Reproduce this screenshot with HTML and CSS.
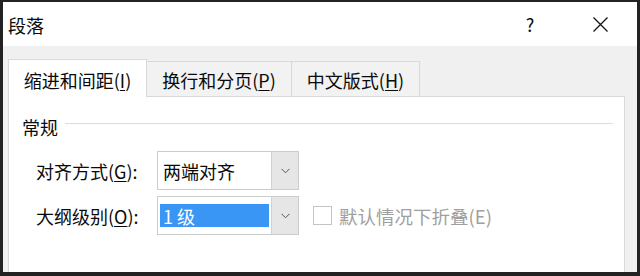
FILE: index.html
```html
<!DOCTYPE html>
<html lang="zh-CN">
<head>
<meta charset="utf-8">
<title>段落</title>
<link rel="stylesheet" href="styles.css">
</head>
<body>
<div class="window">
  <div class="titlebar">
    <div class="title">段落</div>
    <div class="spacer"></div>
    <div class="help">?</div>
    <div class="close">
      <svg width="15" height="15" viewBox="0 0 15 15"><path d="M0.5 0.5 L14.5 14.5 M14.5 0.5 L0.5 14.5" stroke="#111" stroke-width="1.3" fill="none"/></svg>
    </div>
  </div>
  <div class="body">
    <div class="tabs">
      <div class="tab active">缩进和间距(<u>I</u>)</div>
      <div class="tab tab2">换行和分页(<u>P</u>)</div>
      <div class="tab tab3">中文版式(<u>H</u>)</div>
    </div>
    <div class="panel">
      <div class="group-head">
        <span class="group-title">常规</span>
        <span class="group-line"></span>
      </div>
      <div class="row">
        <div class="label">对齐方式(<u>G</u>):</div>
        <div class="combo">
          <div class="combo-value">两端对齐</div>
          <div class="combo-btn"><svg width="9" height="6" viewBox="0 0 9 6"><path d="M0.5 0.8 L4.5 4.8 L8.5 0.8" stroke="#555" stroke-width="1" fill="none"/></svg></div>
        </div>
      </div>
      <div class="row row2">
        <div class="label">大纲级别(<u>O</u>):</div>
        <div class="combo">
          <div class="combo-value"><span class="selected">1 级</span></div>
          <div class="combo-btn"><svg width="9" height="6" viewBox="0 0 9 6"><path d="M0.5 0.8 L4.5 4.8 L8.5 0.8" stroke="#555" stroke-width="1" fill="none"/></svg></div>
        </div>
        <div class="checkbox"></div>
        <div class="check-label">默认情况下折叠(E)</div>
      </div>
    </div>
  </div>
</div>
</body>
</html>
```
FILE: styles.css
```css
html, body {
  margin: 0;
  padding: 0;
  background: #222;
}
body {
  font-family: "Noto Sans CJK SC", "Noto Sans", sans-serif;
  font-size: 18px;
  color: #0a0a0a;
}
u {
  text-decoration: underline;
  text-underline-offset: 2px;
  text-decoration-thickness: 1px;
}
.window {
  width: 640px;
  height: 276px;
  box-sizing: border-box;
  border-style: solid;
  border-color: #222;
  border-width: 2px 3px 4px 3px;
  display: flex;
  flex-direction: column;
  overflow: hidden;
}
.titlebar {
  height: 44px;
  flex: none;
  background: #fff;
  display: flex;
  align-items: center;
  padding: 0 29px 0 5px;
}
.title {
  line-height: 20px;
  padding-top: 2px;
}
.spacer {
  flex: 1;
}
.help {
  width: 20px;
  text-align: center;
  font-size: 18px;
  line-height: 20px;
  margin-right: 53px;
}
.close {
  width: 15px;
  height: 15px;
  display: flex;
}
.body {
  flex: 1;
  background: #f0f0f0;
  padding: 13px 12px 0 5px;
  display: flex;
  flex-direction: column;
}
.tabs {
  height: 37px;
  flex: none;
  display: flex;
  align-items: flex-end;
}
.tab {
  box-sizing: border-box;
  height: 35px;
  background: #f2f2f2;
  border: 1px solid #d9d9d9;
  border-left: none;
  border-bottom: none;
  display: flex;
  align-items: center;
  justify-content: center;
  padding-top: 2px;
  line-height: 20px;
}
.tab.active {
  width: 139px;
  height: 38px;
  margin-bottom: -1px;
  background: #fff;
  border-left: 1px solid #d9d9d9;
  position: relative;
  z-index: 1;
  padding-top: 3px;
}
.tab2 {
  width: 145px;
}
.tab3 {
  width: 128px;
}
.panel {
  flex: 1;
  background: #fff;
  border: 1px solid #d9d9d9;
  border-bottom: none;
  padding: 20px 11px 0 13px;
}
.group-head {
  height: 20px;
  display: flex;
  align-items: center;
}
.group-title {
  line-height: 20px;
}
.group-line {
  flex: 1;
  height: 1px;
  background: #dcdcdc;
  margin-left: 7px;
  margin-bottom: 8px;
}
.row {
  display: flex;
  align-items: center;
  height: 39px;
  margin-top: 14px;
}
.row2 {
  margin-top: 6px;
}
.label {
  width: 121px;
  padding-left: 14px;
  line-height: 20px;
}
.combo {
  box-sizing: border-box;
  width: 142px;
  height: 39px;
  border: 1px solid #cccccc;
  display: flex;
  background: #fff;
}
.combo-value {
  flex: 1;
  display: flex;
  align-items: center;
  padding-left: 5px;
  line-height: 20px;
}
.row2 .combo-value {
  padding: 7px 2px 7px 2px;
  align-items: stretch;
}
.selected {
  flex: 1;
  background: #3a96f5;
  color: #fff;
  padding-left: 3px;
  display: flex;
  align-items: center;
  line-height: 20px;
}
.combo-btn {
  width: 26px;
  background: #e6e6e6;
  border-left: 1px solid #d2d2d2;
  display: flex;
  align-items: center;
  justify-content: center;
}
.checkbox {
  box-sizing: border-box;
  width: 19px;
  height: 19px;
  border: 1px solid #c4c4c4;
  background: #fff;
  margin-left: 14px;
}
.check-label {
  margin-left: 7px;
  color: #a0a0a0;
  font-size: 18.5px;
  line-height: 20px;
}
```
